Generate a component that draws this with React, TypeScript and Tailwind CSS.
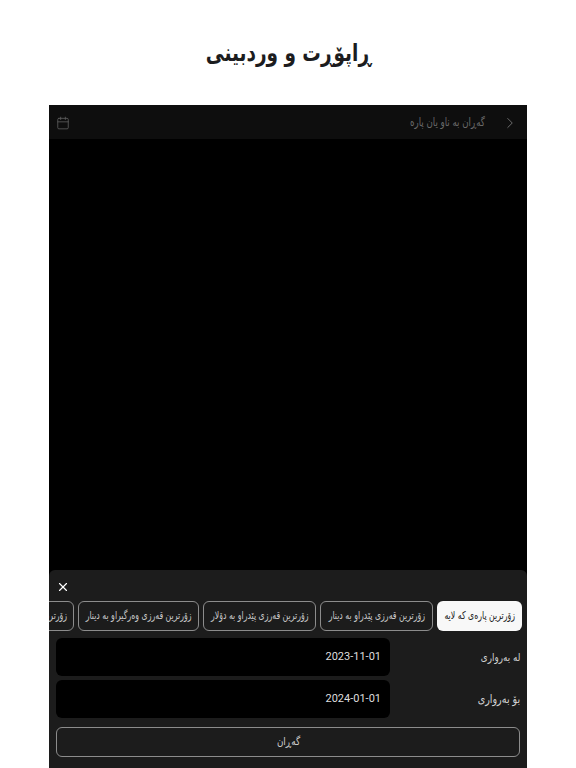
import React from 'react';
import { X, ChevronRight, Calendar } from 'lucide-react';

const FONT = "font-['DejaVu_Sans',sans-serif]";

const CHIPS = [
  { label: 'زۆرترین پارەی کە لایە', width: 'w-[85px]', active: true },
  { label: 'زۆرترین قەرزی پێدراو بە دینار', width: 'w-[113px]' },
  { label: 'زۆرترین قەرزی پێدراو بە دۆلار', width: 'w-[113px]' },
  { label: 'زۆرترین قەرزی وەرگیراو بە دینار', width: 'w-[121px]' },
  { label: 'زۆرترین قەرزی وەرگیراو بە دۆلار', width: 'w-[120px]' },
];

function DateRow({ label, value, labelSize }: { label: string; value: string; labelSize: string }) {
  return (
    <div className="flex items-center justify-between h-[38px]">
      <span className={`inline-block origin-right scale-x-[0.8] ${labelSize} text-[#d4d4d4] leading-none whitespace-nowrap`}>{label}</span>
      <div dir="ltr" className="w-[334px] h-[38px] rounded-md bg-black flex items-center justify-end pr-[9px] text-[11px] text-[#dedede] font-['Roboto',sans-serif]">
        {value}
      </div>
    </div>
  );
}

export default function App() {
  return (
    <div dir="rtl" className={`w-[576px] h-[768px] overflow-hidden bg-white flex flex-col ${FONT}`}>
      <div className="h-[105px] shrink-0 pt-[1px] flex items-center justify-center">
        <h1 className="inline-block scale-x-[0.77] whitespace-nowrap text-[24px] font-bold text-[#1c1c1e]">
          ڕاپۆڕت و وردبینی
        </h1>
      </div>

      <div className="mx-[49px] flex-1 min-h-0 bg-black flex flex-col">
        {/* search bar */}
        <div className="h-[34px] shrink-0 bg-[#0e0e0e] flex items-center pt-[2px] pr-[8px] pl-[7px]">
          <ChevronRight className="w-[18px] h-[18px] text-[#6f6f6f]" strokeWidth={1.3} />
          <span className="mr-[16px] inline-block origin-right scale-x-[0.75] whitespace-nowrap text-[11.5px] text-[#6a6a6a]">گەڕان بە ناو یان پارە</span>
          <Calendar className="mr-auto w-[14px] h-[14px] text-[#5f5f5f]" strokeWidth={1.4} />
        </div>

        <div className="flex-1" />

        {/* filter sheet */}
        <div className="h-[198px] shrink-0 bg-[#1c1c1c] rounded-t-md flex flex-col">
          <div className="h-[31px] shrink-0 flex items-end justify-end pl-[7px] pb-[7px]">
            <X className="w-[14px] h-[14px] text-white" strokeWidth={2} />
          </div>
          <div className="h-[30px] shrink-0 flex gap-[4px] pr-[5px] overflow-hidden">
            {CHIPS.map((c) => (
              <div
                key={c.label}
                className={`${c.width} shrink-0 h-[30px] rounded-md flex items-center justify-center text-[11px] ${
                  c.active
                    ? 'bg-[#f8f8f8] text-[#1c1c1c]'
                    : 'border border-[#8c8c8c] text-[#c8c8c8]'
                }`}
              >
                <span className="inline-block scale-x-[0.71] whitespace-nowrap">{c.label}</span>
              </div>
            ))}
          </div>
          <div className="mt-[7px] pr-[7px] pl-[7px] flex flex-col gap-[4px]">
            <DateRow label="لە بەرواری" value="2023-11-01" labelSize="text-[11px]" />
            <DateRow label="بۆ بەرواری" value="2024-01-01" labelSize="text-[12px]" />
          </div>
          <div className="mt-[9px] mr-[7px] ml-[7px] h-[30px] rounded-md border border-[#8c8c8c] flex items-center justify-center text-[11px] text-[#d0d0d0]">
            <span className="inline-block scale-x-[0.8]">گەڕان</span>
          </div>
        </div>
      </div>
    </div>
  );
}
